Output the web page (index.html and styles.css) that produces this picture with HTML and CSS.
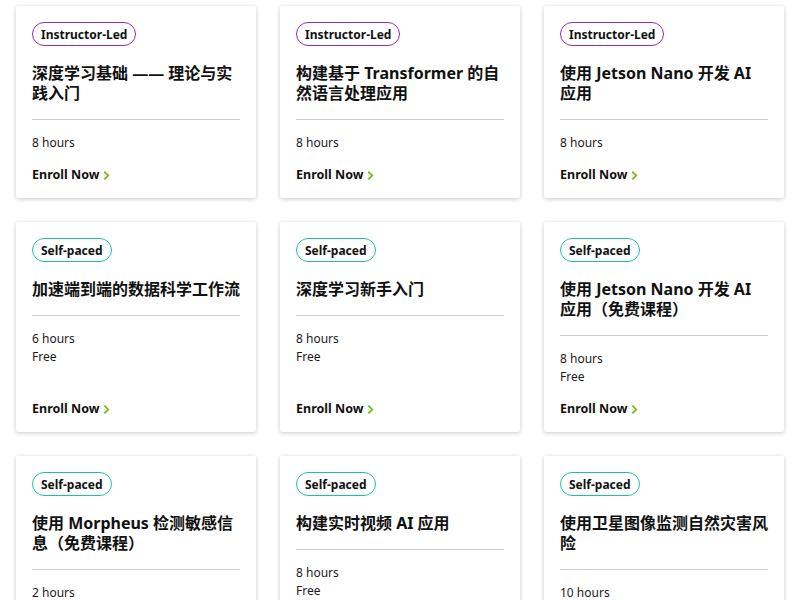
FILE: index.html
```html
<!DOCTYPE html>
<html lang="zh-CN">
<head>
  <meta charset="UTF-8">
  <title>Courses</title>
  <link rel="stylesheet" href="styles.css">
</head>
<body>

<div class="course-grid">

  <div class="card">
    <span class="badge led">Instructor-Led</span>
    <h3 class="title">深度学习基础 —— 理论与实践入门</h3>
    <div class="meta">
      <p>8 hours</p>
    </div>
    <a class="enroll" href="#">Enroll Now <svg viewBox="0 0 8 12" width="7" height="11"><path d="M1.5 1.5 L6 6 L1.5 10.5" /></svg></a>
  </div>

  <div class="card">
    <span class="badge led">Instructor-Led</span>
    <h3 class="title">构建基于 Transformer 的自然语言处理应用</h3>
    <div class="meta">
      <p>8 hours</p>
    </div>
    <a class="enroll" href="#">Enroll Now <svg viewBox="0 0 8 12" width="7" height="11"><path d="M1.5 1.5 L6 6 L1.5 10.5" /></svg></a>
  </div>

  <div class="card">
    <span class="badge led">Instructor-Led</span>
    <h3 class="title">使用 Jetson Nano 开发 AI 应用</h3>
    <div class="meta">
      <p>8 hours</p>
    </div>
    <a class="enroll" href="#">Enroll Now <svg viewBox="0 0 8 12" width="7" height="11"><path d="M1.5 1.5 L6 6 L1.5 10.5" /></svg></a>
  </div>

  <div class="card">
    <span class="badge self">Self-paced</span>
    <h3 class="title">加速端到端的数据科学工作流</h3>
    <div class="meta">
      <p>6 hours</p>
      <p>Free</p>
    </div>
    <a class="enroll" href="#">Enroll Now <svg viewBox="0 0 8 12" width="7" height="11"><path d="M1.5 1.5 L6 6 L1.5 10.5" /></svg></a>
  </div>

  <div class="card">
    <span class="badge self">Self-paced</span>
    <h3 class="title">深度学习新手入门</h3>
    <div class="meta">
      <p>8 hours</p>
      <p>Free</p>
    </div>
    <a class="enroll" href="#">Enroll Now <svg viewBox="0 0 8 12" width="7" height="11"><path d="M1.5 1.5 L6 6 L1.5 10.5" /></svg></a>
  </div>

  <div class="card">
    <span class="badge self">Self-paced</span>
    <h3 class="title">使用 Jetson Nano 开发 AI 应用（免费课程）</h3>
    <div class="meta">
      <p>8 hours</p>
      <p>Free</p>
    </div>
    <a class="enroll" href="#">Enroll Now <svg viewBox="0 0 8 12" width="7" height="11"><path d="M1.5 1.5 L6 6 L1.5 10.5" /></svg></a>
  </div>

  <div class="card">
    <span class="badge self">Self-paced</span>
    <h3 class="title">使用 Morpheus 检测敏感信息（免费课程）</h3>
    <div class="meta">
      <p>2 hours</p>
      <p>Free</p>
    </div>
    <a class="enroll" href="#">Enroll Now <svg viewBox="0 0 8 12" width="7" height="11"><path d="M1.5 1.5 L6 6 L1.5 10.5" /></svg></a>
  </div>

  <div class="card">
    <span class="badge self">Self-paced</span>
    <h3 class="title">构建实时视频 AI 应用</h3>
    <div class="meta">
      <p>8 hours</p>
      <p>Free</p>
    </div>
    <a class="enroll" href="#">Enroll Now <svg viewBox="0 0 8 12" width="7" height="11"><path d="M1.5 1.5 L6 6 L1.5 10.5" /></svg></a>
  </div>

  <div class="card">
    <span class="badge self">Self-paced</span>
    <h3 class="title">使用卫星图像监测自然灾害风险</h3>
    <div class="meta">
      <p>10 hours</p>
      <p>Free</p>
    </div>
    <a class="enroll" href="#">Enroll Now <svg viewBox="0 0 8 12" width="7" height="11"><path d="M1.5 1.5 L6 6 L1.5 10.5" /></svg></a>
  </div>

</div>

</body>
</html>
```

FILE: styles.css
```css
    body {
      margin: 0;
      padding: 6px 16px 24px;
      font-family: "Noto Sans", "Noto Sans CJK SC", sans-serif;
      color: #1a1a1a;
      background: #fff;
    }
    .course-grid {
      display: grid;
      grid-template-columns: repeat(3, 240px);
      column-gap: 24px;
      row-gap: 24px;
    }
    .card {
      display: flex;
      flex-direction: column;
      align-items: flex-start;
      padding: 16px 16px 15px;
      background: #fff;
      border-radius: 2px;
      box-shadow: 0 1px 4px rgba(0, 0, 0, 0.22);
    }
    .badge {
      display: inline-flex;
      align-items: center;
      height: 24px;
      box-sizing: border-box;
      padding: 0 8px;
      border-radius: 12px;
      font-size: 12px;
      font-weight: 700;
      color: #111;
    }
    .badge.led {
      border: 1.5px solid #8a2fc4;
    }
    .badge.self {
      border: 1.5px solid #1fbfa5;
    }
    .title {
      align-self: stretch;
      margin: 17px 0 0;
      padding-bottom: 16px;
      border-bottom: 1px solid #cccccc;
      font-size: 16px;
      line-height: 20px;
      font-weight: 700;
      color: #111;
    }
    .meta {
      margin-top: 14px;
      font-size: 12px;
      line-height: 18px;
    }
    .meta p {
      margin: 0;
    }
    .enroll {
      display: inline-flex;
      align-items: center;
      gap: 4px;
      margin-top: auto;
      padding-top: 15px;
      font-size: 12.5px;
      line-height: 16px;
      font-weight: 700;
      color: #111;
      text-decoration: none;
    }
    .enroll svg path {
      fill: none;
      stroke: #76b900;
      stroke-width: 2;
    }
```
